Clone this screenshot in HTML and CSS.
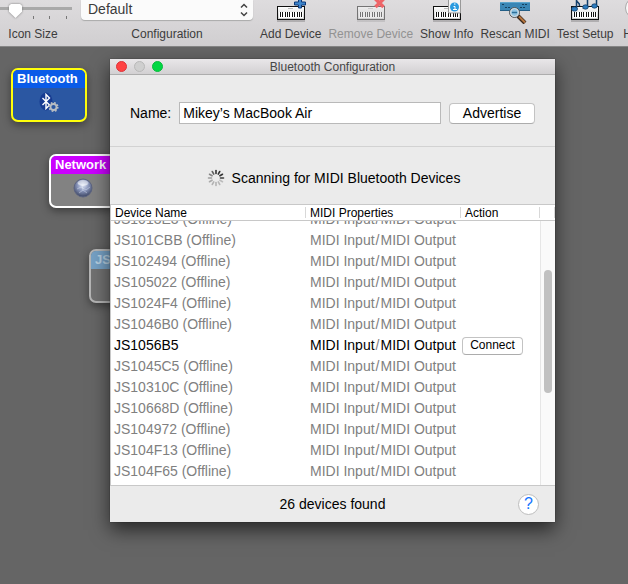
FILE: index.html
```html
<!DOCTYPE html>
<html lang="en">
<head>
<meta charset="utf-8">
<title>Bluetooth Configuration</title>
<link rel="stylesheet" href="styles.css">
</head>
<body>
<svg class="defs" aria-hidden="true">
  <defs>
    <linearGradient id="keys-body" x1="0" y1="0" x2="0" y2="1">
      <stop offset="0" stop-color="#fff"/><stop offset="1" stop-color="#c9c9c9"/>
    </linearGradient>
    <radialGradient id="globe-fill" cx=".5" cy=".35" r=".6">
      <stop offset="0" stop-color="#dfe5f5"/><stop offset=".5" stop-color="#8c98bd"/><stop offset="1" stop-color="#46506f"/>
    </radialGradient>
    <symbol id="keyboard" viewBox="0 0 30 24">
      <rect x="1" y="20" width="28" height="2" fill="#000" opacity=".18"/>
      <rect x="1" y="6" width="28" height="14" fill="#111"/>
      <rect x="2" y="7" width="26" height="12" fill="url(#keys-body)"/>
      <rect x="12" y="8" width="5" height="1" fill="#bbb"/>
      <rect x="3" y="12" width="24" height="6" fill="#fff"/>
      <path d="M4.500 12v5M6.500 12v5M9.500 12v5M11.500 12v5M13.500 12v5M16.500 12v5M18.500 12v5M21.500 12v5M23.500 12v5M25.500 12v5" stroke="#111"/>
    </symbol>
  </defs>
</svg>

<header class="toolbar">
  <div class="tool size-tool">
    <div class="slider">
      <input id="icon-size" type="range" min="0" max="3" value="0">
      <div class="ticks"><i></i><i></i><i></i><i></i></div>
    </div>
    <label for="icon-size">Icon Size</label>
  </div>
  <div class="tool config-tool">
    <div class="select-box">
      <select id="config"><option>Default</option></select>
      <svg width="8" height="14" viewBox="0 0 8 14"><path d="M1 4.500 4 1.500l3 3M1 9.500l3 3 3-3" fill="none" stroke="#444" stroke-width="1.500"/></svg>
    </div>
    <label for="config">Configuration</label>
  </div>
  <button class="tool">
    <svg width="30" height="24"><use href="#keyboard"/><path d="M22.500-2h3v4h4v3h-4v3h-3v-3h-4v-3h4z" fill="#3e86cd" stroke="#0f3a78"/></svg>
    <span>Add Device</span>
  </button>
  <button class="tool" disabled>
    <svg width="30" height="24"><use href="#keyboard" opacity=".5"/><path d="M19.500-1l8 8M27.500-1l-8 8" stroke="#ee6468" stroke-width="3.500"/></svg>
    <span>Remove Device</span>
  </button>
  <button class="tool">
    <svg width="30" height="24"><use href="#keyboard"/><path d="M16.500-1h12v14h-12z" fill="#f4f4f4" stroke="#999"/><circle cx="22.500" cy="7" r="4.500" fill="#2b9be0"/><path d="M21.500 6.500h1.500v3M21 9.500h4M22 4h1.500" fill="none" stroke="#fff"/></svg>
    <span>Show Info</span>
  </button>
  <button class="tool">
    <svg width="30" height="26"><path d="M0 2h30v9H0z" fill="#3986b5"/><path d="M0 2.500h30" stroke="#5da5cc"/><path d="M0 10.500h30" stroke="#235e86"/><path d="M2 4.500h3M5 7.500h5M20 7.500h6M22 4.500h5" stroke="#14415f" stroke-dasharray="2 1"/><path d="M18 16l7 7" stroke="#3b2a1e" stroke-width="4"/><path d="M19 16.500l6 6" stroke="#b8763e" stroke-width="2"/><circle cx="14.500" cy="12.500" r="5" fill="#8fc4e2" stroke="#555"/><circle cx="14.500" cy="12.500" r="4" fill="none" stroke="#ddd"/><path d="M12 12.500h5" stroke="#2d6f98" stroke-width="1.500"/></svg>
    <span>Rescan MIDI</span>
  </button>
  <button class="tool">
    <svg width="30" height="24"><use href="#keyboard"/><path d="M6.500 9V0c0 3 3.500 2 3 6M17.500 7V0M26.500 6V0" fill="none" stroke="#123f6b" stroke-width="1.500"/><g fill="#2d7cc0" stroke="#0d3257" stroke-width=".7"><ellipse cx="4.500" cy="9" rx="3" ry="2.200"/><ellipse cx="15.500" cy="7" rx="2.800" ry="2.200"/><ellipse cx="24.500" cy="6" rx="2.800" ry="2.200"/></g></svg>
    <span>Test Setup</span>
  </button>
  <button class="tool help-tool">
    <svg width="30" height="24"><circle cx="15" cy="8" r="10.500" fill="#f8f8f8" stroke="#aaa"/></svg>
    <span>Help</span>
  </button>
</header>

<main class="canvas">
  <div class="node bluetooth">
    <h2>Bluetooth</h2>
    <svg width="22" height="20" viewBox="0 0 22 20"><ellipse cx="8" cy="9.500" rx="6.500" ry="9" fill="#173b91"/><path d="M4.500 6l7 7L8 16.500v-14L11.500 6l-7 7" fill="none" stroke="#fff" stroke-width="1.400"/><circle cx="15.500" cy="15" r="3" fill="none" stroke="#b9bdc2" stroke-width="1.800"/><circle cx="15.500" cy="15" r="4.300" fill="none" stroke="#b9bdc2" stroke-width="1.500" stroke-dasharray="1.700 1.680"/></svg>
  </div>
  <div class="node network">
    <h2>Network</h2>
    <svg width="20" height="20" viewBox="0 0 20 20"><circle cx="10" cy="10" r="9" fill="url(#globe-fill)" stroke="#5d6480"/><path d="M5 5l4 2 5-1M4 11l4-2 5 3 4-3M6 15l4-3 4 3M9 7l1 5" fill="none" stroke="#e8edfa" stroke-width=".7" opacity=".6"/><ellipse cx="10" cy="5" rx="5.500" ry="3" fill="#fff" opacity=".45"/></svg>
  </div>
  <div class="node offline"><h2>JS101</h2></div>

  <section class="dialog" role="dialog" aria-labelledby="dialog-title">
    <div class="titlebar">
      <div class="lights">
        <button class="close" aria-label="Close"></button>
        <button class="minimize" aria-label="Minimize" disabled></button>
        <button class="expand" aria-label="Zoom"></button>
      </div>
      <h1 id="dialog-title">Bluetooth Configuration</h1>
    </div>
    <form class="name-row">
      <label for="name">Name:</label>
      <input id="name" type="text" value="Mikey’s MacBook Air">
      <button type="button">Advertise</button>
    </form>
    <div class="status">
      <svg width="18" height="18" viewBox="-9 -9 18 18" stroke="#333" stroke-width="1.600" stroke-linecap="round">
        <path d="M0-4.500v-3"/><path d="M0-4.500v-3" transform="rotate(30)"/><path d="M0-4.500v-3" transform="rotate(60)"/>
        <path d="M0-4.500v-3" transform="rotate(90)" opacity=".95"/><path d="M0-4.500v-3" transform="rotate(120)" opacity=".25"/><path d="M0-4.500v-3" transform="rotate(150)" opacity=".28"/>
        <path d="M0-4.500v-3" transform="rotate(180)" opacity=".3"/><path d="M0-4.500v-3" transform="rotate(210)" opacity=".3"/><path d="M0-4.500v-3" transform="rotate(240)" opacity=".35"/>
        <path d="M0-4.500v-3" transform="rotate(270)" opacity=".42"/><path d="M0-4.500v-3" transform="rotate(300)" opacity=".55"/><path d="M0-4.500v-3" transform="rotate(330)" opacity=".75"/>
      </svg>
      <span>Scanning for MIDI Bluetooth Devices</span>
    </div>
    <div class="list">
      <table>
        <colgroup><col class="c-name"><col class="c-midi"><col class="c-action"><col class="c-scroll"></colgroup>
        <thead><tr><th>Device Name</th><th>MIDI Properties</th><th>Action</th><th></th></tr></thead>
        <tbody>
          <tr class="partial"><td><div>JS1013E3 (Offline)</div></td><td><div>MIDI Input<span class="sep">/</span>MIDI Output</div></td><td></td><td class="scroll" rowspan="13"><div class="thumb"></div></td></tr>
          <tr><td>JS101CBB (Offline)</td><td>MIDI Input<span class="sep">/</span>MIDI Output</td><td></td></tr>
          <tr><td>JS102494 (Offline)</td><td>MIDI Input<span class="sep">/</span>MIDI Output</td><td></td></tr>
          <tr><td>JS105022 (Offline)</td><td>MIDI Input<span class="sep">/</span>MIDI Output</td><td></td></tr>
          <tr><td>JS1024F4 (Offline)</td><td>MIDI Input<span class="sep">/</span>MIDI Output</td><td></td></tr>
          <tr><td>JS1046B0 (Offline)</td><td>MIDI Input<span class="sep">/</span>MIDI Output</td><td></td></tr>
          <tr class="online"><td>JS1056B5</td><td>MIDI Input<span class="sep">/</span>MIDI Output</td><td class="action"><button>Connect</button></td></tr>
          <tr><td>JS1045C5 (Offline)</td><td>MIDI Input<span class="sep">/</span>MIDI Output</td><td></td></tr>
          <tr><td>JS10310C (Offline)</td><td>MIDI Input<span class="sep">/</span>MIDI Output</td><td></td></tr>
          <tr><td>JS10668D (Offline)</td><td>MIDI Input<span class="sep">/</span>MIDI Output</td><td></td></tr>
          <tr><td>JS104972 (Offline)</td><td>MIDI Input<span class="sep">/</span>MIDI Output</td><td></td></tr>
          <tr><td>JS104F13 (Offline)</td><td>MIDI Input<span class="sep">/</span>MIDI Output</td><td></td></tr>
          <tr class="last"><td>JS104F65 (Offline)</td><td>MIDI Input<span class="sep">/</span>MIDI Output</td><td></td></tr>
        </tbody>
      </table>
    </div>
    <footer class="footer">
      <span>26 devices found</span>
      <button class="help" aria-label="Help">?</button>
    </footer>
  </section>
</main>
</body>
</html>
```
FILE: styles.css
```css
* { box-sizing: border-box; }

html, body { height: 100%; }

body {
  margin: 0;
  display: flex;
  flex-direction: column;
  overflow: hidden;
  background: #656565;
  color: #000;
  font: 14px/20px "Liberation Sans", Arial, sans-serif;
}

button, input, select { font: inherit; color: inherit; margin: 0; }
h1, h2 { margin: 0; }
.defs { position: absolute; width: 0; height: 0; }

/* Toolbar */
.toolbar {
  flex: none;
  display: flex;
  gap: 7px;
  height: 47px;
  background: linear-gradient(#dedcde, #d0ced0);
  border-bottom: 1px solid #858585;
  color: #3c3c3c;
  font-size: 12px;
  line-height: 14px;
  white-space: nowrap;
}

.tool {
  flex: none;
  display: flex;
  flex-direction: column;
  align-items: center;
  justify-content: flex-start;
  padding: 0;
  border: 0;
  background: none;
}

.tool > svg { display: block; height: 24px; margin-bottom: 3px; }
.tool:disabled { color: #929292; }

.size-tool { width: 74px; }
.size-tool label { padding-right: 8px; }
.slider { width: 100%; height: 27px; background: linear-gradient(#a9a9a9, #a9a9a9) 0 7px / 72px 3px no-repeat; }

.slider input {
  display: block;
  appearance: none;
  width: 63px;
  height: 14px;
  margin: 4px 0 0 9px;
  background: none;
  filter: drop-shadow(0 0 1px #777);
}

.slider input::-webkit-slider-thumb {
  appearance: none;
  width: 13px;
  height: 14px;
  background: #fff;
  clip-path: polygon(15% 0, 85% 0, 100% 12%, 100% 55%, 50% 100%, 0 55%, 0 12%);
}

.ticks { display: flex; justify-content: space-between; width: 51px; margin-left: 16px; margin-top: -2px; }
.ticks i { width: 1px; height: 3px; background: #777; }
.ticks i:first-child { visibility: hidden; }

.select-box {
  display: flex;
  align-items: center;
  width: 172px;
  height: 20px;
  margin-bottom: 7px;
  padding-right: 5px;
  border-radius: 0 0 4px 4px;
  background: #fbfbfb;
  box-shadow: 0 1px 1px #aaa;
}

.select-box select {
  flex: 1;
  appearance: none;
  padding: 0 0 2px 7px;
  border: 0;
  background: none;
  font-size: 14px;
}

/* Studio canvas */
.canvas { position: relative; flex: 1; }

.node {
  position: absolute;
  width: 76px;
  height: 54px;
  overflow: hidden;
  display: flex;
  flex-direction: column;
  align-items: center;
  gap: 4px;
  border: 2px solid #fff;
  border-radius: 7px;
  background: #828282;
  color: #fff;
  box-shadow: 0 3px 8px #0006;
}

.node h2 { align-self: stretch; padding-left: 4px; font-size: 13px; line-height: 18px; text-align: left; }
.bluetooth { left: 11px; top: 21px; border-color: #ffff0a; background: #2b57a2; }
.bluetooth h2 { background: #0a5be8; }
.network { left: 49px; top: 107px; width: 68px; }
.network h2 { background: #cb00ff; }
.offline { left: 89px; top: 202px; border-color: #b5b5b5; background: #717171; color: #b7cfe1; }
.offline h2 { background: #76a1c5; }

/* Dialog */
.dialog {
  position: absolute;
  left: 110px;
  top: 12px;
  width: 445px;
  background: #ebebeb;
  box-shadow: 0 0 1px #0008, 0 8px 18px #0009;
}

.titlebar {
  display: grid;
  grid-template-columns: 1fr auto 1fr;
  align-items: center;
  height: 16px;
  background: linear-gradient(#e9e7e9, #d2d0d2);
  border-bottom: 1px solid #adadad;
}

.titlebar h1 { color: #464646; font-size: 12px; font-weight: 400; line-height: 14px; }
.lights { display: flex; gap: 7px; padding-left: 6px; }
.lights button { width: 11px; height: 11px; padding: 0; border: 1px solid; border-radius: 50%; }
.lights .close { background: #ff4343; border-color: #df3339; }
.lights .minimize { background: #cfcfcf; border-color: #b9b9b9; }
.lights .expand { background: #00d742; border-color: #09bb3d; }

.name-row {
  display: flex;
  align-items: center;
  gap: 8px;
  height: 72px;
  padding: 5px 20px 0;
  border-bottom: 1px solid #d2d2d2;
}

.name-row input {
  flex: 1;
  min-width: 0;
  height: 22px;
  padding: 1px 3px;
  border: 1px solid #b9b9b9;
  background: #fff;
}

.name-row button, .action button {
  border: 1px solid #c3c3c3;
  border-bottom-color: #acacac;
  border-radius: 4px;
  background: #fff;
  padding: 0;
}

.name-row button { width: 86px; height: 21px; line-height: 18px; }

.status { display: flex; align-items: center; justify-content: center; gap: 7px; height: 57px; padding: 4px 0 0 2px; }

.list { border: 1px solid #c8c8c8; border-right: 0; background: #fff; }

table { width: 100%; border-collapse: separate; border-spacing: 0; table-layout: fixed; white-space: nowrap; }
.c-name { width: 195px; }
.c-midi { width: 155px; }
.c-scroll { width: 15px; }

th {
  height: 16px;
  padding: 0 4px;
  border-bottom: 1px solid #c8c8c8;
  background: linear-gradient(#d8d8d8, #d8d8d8) right center / 1px 11px no-repeat;
  font-size: 12px;
  font-weight: 400;
  line-height: 14px;
  text-align: left;
}

td { height: 21px; padding: 0 3px; color: #808080; line-height: 21px; }
th:nth-child(2), td:nth-child(2) { padding-left: 4px; }
.sep { padding: 0 1px; }
.partial td { height: 9px; }
.partial td > div:not(.thumb) { display: flex; align-items: flex-end; height: 9px; overflow: hidden; }
.last td { height: 24px; padding-bottom: 3px; }
.online td { color: #000; }
.online .sep { color: #808080; }
.online .action { padding: 0 1px; }
.action button { display: block; width: 61px; height: 18px; font-size: 12px; line-height: 15px; }

td.scroll { padding: 49px 3px 0; vertical-align: top; border-left: 1px solid #e6e6e6; background: #fafafa; }
.thumb { width: 8px; height: 123px; border-radius: 4px; background: #c1c1c1; }

.footer { display: grid; grid-template-columns: 1fr auto 1fr; align-items: center; height: 36px; padding: 2px 16px 2px 16px; }
.footer span { grid-column: 2; }

.help {
  justify-self: end;
  width: 21px;
  height: 21px;
  padding: 0;
  border: 1px solid #bdbdbd;
  border-radius: 50%;
  background: #fff;
  color: #1475ff;
  font-size: 16px;
  line-height: 18px;
}
```
